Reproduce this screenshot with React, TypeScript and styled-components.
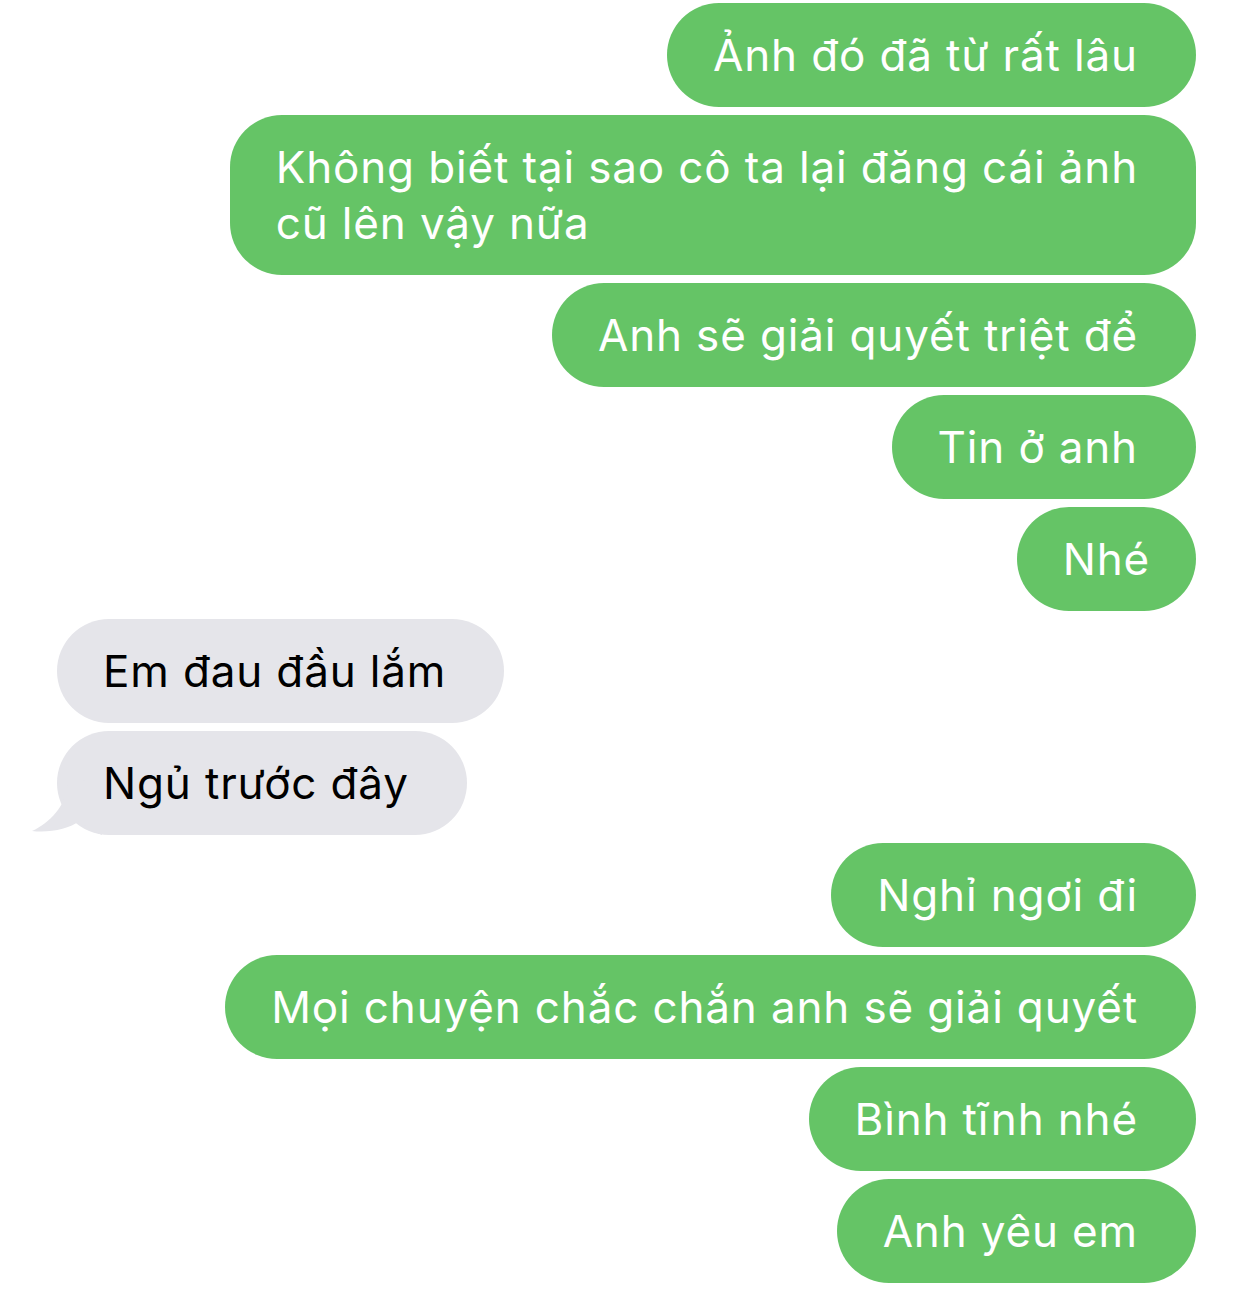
import React from "react";
import styled, { createGlobalStyle } from "styled-components";

const Global = createGlobalStyle`
  html, body { margin: 0; padding: 0; background: #ffffff; }
  body { font-family: Inter, "Noto Sans", "DejaVu Sans", sans-serif; }
`;

const Thread = styled.div`
  width: 1242px;
  display: flex;
  flex-direction: column;
  gap: 8px;
  padding: 3px 0 12px;
  box-sizing: border-box;
`;

const Row = styled.div<{ $out: boolean }>`
  display: flex;
  justify-content: ${(p) => (p.$out ? "flex-end" : "flex-start")};
  padding: ${(p) => (p.$out ? "0 46px 0 0" : "0 0 0 57px")};
`;

const Bubble = styled.div<{ $out: boolean; $even?: boolean }>`
  position: relative;
  box-sizing: border-box;
  padding: ${(p) => (p.$even ? "24px 46px" : "24px 58px 24px 46px")};
  border-radius: 52px;
  background: ${(p) => (p.$out ? "#65c466" : "#e5e5ea")};
  color: ${(p) => (p.$out ? "#ffffff" : "#000000")};
  font-size: 44px;
  line-height: 56px;
  letter-spacing: 0.85px;
  text-align: left;
  white-space: pre;
`;

const Tail = styled.svg`
  position: absolute;
  left: -25px;
  bottom: 0;
  width: 70px;
  height: 60px;
`;

type Msg = { text: string; out: boolean; tail?: boolean; even?: boolean };

const messages: Msg[] = [
  { text: "Ảnh đó đã từ rất lâu", out: true },
  { text: "Không biết tại sao cô ta lại đăng cái ảnh\ncũ lên vậy nữa", out: true },
  { text: "Anh sẽ giải quyết triệt để", out: true },
  { text: "Tin ở anh", out: true },
  { text: "Nhé", out: true, even: true },
  { text: "Em đau đầu lắm", out: false },
  { text: "Ngủ trước đây", out: false, tail: true },
  { text: "Nghỉ ngơi đi", out: true },
  { text: "Mọi chuyện chắc chắn anh sẽ giải quyết", out: true },
  { text: "Bình tĩnh nhé", out: true },
  { text: "Anh yêu em", out: true },
];

export default function App() {
  return (
    <>
      <Global />
      <Thread>
        {messages.map((m, i) => (
          <Row key={i} $out={m.out}>
            <Bubble $out={m.out} $even={m.even}>
              {m.tail && (
                <Tail viewBox="0 0 70 60">
                  <path
                    d="M36 10 C 34 30, 18 48, 0 56 C 18 58, 36 54, 48 46 C 54 52, 60 56, 70 60 L 70 0 Z"
                    fill="#e5e5ea"
                  />
                </Tail>
              )}
              {m.text}
            </Bubble>
          </Row>
        ))}
      </Thread>
    </>
  );
}
